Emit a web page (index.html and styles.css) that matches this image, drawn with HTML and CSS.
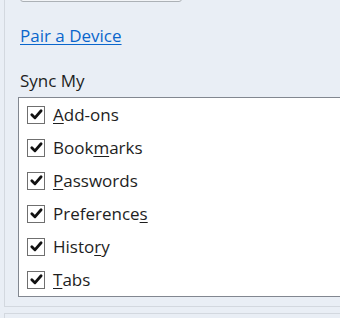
FILE: index.html
```html
<!DOCTYPE html>
<html>
<head>
<meta charset="utf-8">
<link rel="stylesheet" href="styles.css">
</head>
<body>
<div class="group">
  <div class="btn"></div>
  <a class="link" href="#">Pair a Device</a>
  <div class="label">Sync My</div>
  <div class="listbox">
    <div class="row"><span class="cb"><svg viewBox="0 0 16 16" width="15" height="15"><path d="M3 8.2 L6.3 11.6 L12.9 4" fill="none" stroke="#111" stroke-width="3" stroke-linecap="round" stroke-linejoin="round"/></svg></span><span class="txt"><u>A</u>dd-ons</span></div>
    <div class="row"><span class="cb"><svg viewBox="0 0 16 16" width="15" height="15"><path d="M3 8.2 L6.3 11.6 L12.9 4" fill="none" stroke="#111" stroke-width="3" stroke-linecap="round" stroke-linejoin="round"/></svg></span><span class="txt">Book<u>m</u>arks</span></div>
    <div class="row"><span class="cb"><svg viewBox="0 0 16 16" width="15" height="15"><path d="M3 8.2 L6.3 11.6 L12.9 4" fill="none" stroke="#111" stroke-width="3" stroke-linecap="round" stroke-linejoin="round"/></svg></span><span class="txt"><u>P</u>asswords</span></div>
    <div class="row"><span class="cb"><svg viewBox="0 0 16 16" width="15" height="15"><path d="M3 8.2 L6.3 11.6 L12.9 4" fill="none" stroke="#111" stroke-width="3" stroke-linecap="round" stroke-linejoin="round"/></svg></span><span class="txt">Preference<u>s</u></span></div>
    <div class="row"><span class="cb"><svg viewBox="0 0 16 16" width="15" height="15"><path d="M3 8.2 L6.3 11.6 L12.9 4" fill="none" stroke="#111" stroke-width="3" stroke-linecap="round" stroke-linejoin="round"/></svg></span><span class="txt">Histo<u>r</u>y</span></div>
    <div class="row"><span class="cb"><svg viewBox="0 0 16 16" width="15" height="15"><path d="M3 8.2 L6.3 11.6 L12.9 4" fill="none" stroke="#111" stroke-width="3" stroke-linecap="round" stroke-linejoin="round"/></svg></span><span class="txt"><u>T</u>abs</span></div>
  </div>
</div>
<div class="group2"></div>
</body>
</html>
```
FILE: styles.css
```css
html, body {
  margin: 0;
  padding: 0;
  background: #e9eef5;
  overflow: hidden;
  font-family: "Open Sans", "Noto Sans", sans-serif;
  color: #1e1e1e;
}
.group {
  margin-left: 4px;
  border-left: 1px solid #d3d8df;
  border-bottom: 1px solid #d3d8df;
  height: 307px;
  box-sizing: border-box;
  display: flex;
  flex-direction: column;
  align-items: flex-start;
}
.btn {
  margin-top: -19px;
  margin-left: 15px;
  width: 160px;
  height: 19px;
  border: 1px solid #acb1b6;
  border-radius: 3px;
  background: #f2f4f7;
  flex: none;
}
.link {
  margin-top: 23px;
  margin-left: 15px;
  font-size: 17px;
  line-height: 22px;
  color: #0a66cc;
  text-decoration: underline;
  text-underline-offset: 2px;
}
.label {
  margin-top: 23px;
  margin-left: 15px;
  font-size: 17px;
  line-height: 22px;
}
.listbox {
  margin-top: 5px;
  margin-left: 13px;
  width: 322px;
  background: #fff;
  border: 1px solid #828790;
  border-right: none;
  box-sizing: border-box;
  display: flex;
  flex-direction: column;
  flex: none;
}
.row {
  height: 33px;
  display: flex;
  align-items: center;
  gap: 8px;
  padding-left: 8px;
}
.cb {
  width: 16px;
  height: 16px;
  border: 1px solid #6f6f6f;
  background: #fff;
  display: flex;
  align-items: center;
  justify-content: center;
}
.txt {
  font-size: 17px;
  line-height: 22px;
}
.txt u {
  text-underline-offset: 2px;
}
.group2 {
  margin-left: 4px;
  margin-top: 6px;
  border-left: 1px solid #d3d8df;
  border-top: 1px solid #d3d8df;
  height: 5px;
}
```
